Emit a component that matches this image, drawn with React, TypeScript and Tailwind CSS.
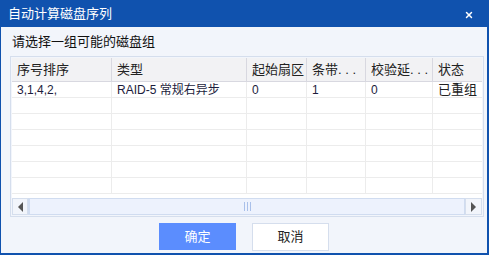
import { X } from "lucide-react";

const columns = [
  { label: "序号排序", w: "w-[100px]" },
  { label: "类型", w: "w-[135px]" },
  { label: "起始扇区", w: "w-[60px]" },
  { label: "条带. . .", w: "w-[59px]" },
  { label: "校验延. . .", w: "w-[67px]" },
  { label: "状态", w: "w-[60px]" },
];

const rows = [
  ["3,1,4,2,", "RAID-5 常规右异步", "0", "1", "0", "已重组"],
  ["", "", "", "", "", ""],
  ["", "", "", "", "", ""],
  ["", "", "", "", "", ""],
  ["", "", "", "", "", ""],
  ["", "", "", "", "", ""],
  ["", "", "", "", "", ""],
];

const App = () => {
  return (
    <div
      className="w-[489px] h-[255px] flex flex-col bg-[#1052ae] overflow-hidden"
      style={{ fontFamily: '"Liberation Sans", "Noto Sans CJK SC", sans-serif' }}
    >
      {/* title bar */}
      <div className="h-[27px] flex items-center justify-between pl-[8px] pr-[15px] pt-[2px] text-white">
        <span className="text-[13px] leading-none -mt-[2px]">自动计算磁盘序列</span>
        <X size={10} strokeWidth={3.5} />
      </div>

      <div className="flex-1 ml-px mr-[2px] mb-[2px] bg-[#f2f5fb] flex flex-col">
        <div className="h-[29px] pl-[11px] pt-[7px] text-[13px] leading-[16px] text-[#111]">请选择一组可能的磁盘组</div>

        <div className="ml-[9px] w-[474px] h-[161px] border border-[#d5deed] p-px flex flex-col">
          <div className="flex-1 bg-white overflow-hidden">
            <div className="flex bg-[#f2f2f4] h-[24px] border-b border-[#d8d8e0]">
              {columns.map((c) => (
                <div
                  key={c.label}
                  className={`${c.w} shrink-0 border-r border-[#d8d8e0] pl-[5px] flex items-center text-[13px] text-[#222]`}
                >
                  {c.label}
                </div>
              ))}
            </div>
            {rows.map((r, i) => (
              <div key={i} className="flex h-[16px] border-b border-[#ececec]">
                {r.map((cell, j) => (
                  <div
                    key={j}
                    className={`${columns[j].w} shrink-0 border-r border-[#ececec] pl-[5px] flex items-center text-[12px] leading-none text-[#1c1c3c] ${j === 5 ? "text-[13px] text-[#222]" : ""}`}
                  >
                    {cell}
                  </div>
                ))}
              </div>
            ))}
          </div>

          {/* horizontal scrollbar */}
          <div className="h-[17px] flex bg-[#edf2fd]">
            <div className="w-[16px] border border-[#d5deed] bg-[#f2f5fb] flex items-center justify-center">
              <div className="w-0 h-0 border-y-[5px] border-y-transparent border-r-[5px] border-r-[#555]" />
            </div>
            <div className="flex-1 border border-[#d0dcf0] border-l-2 border-l-[#d0dcf0] bg-[#edf2fd] flex items-center justify-center">
              <div className="flex gap-[2px]">
                <div className="w-px h-[9px] bg-[#a9c0ea]" />
                <div className="w-px h-[9px] bg-[#a9c0ea]" />
                <div className="w-px h-[9px] bg-[#a9c0ea]" />
              </div>
            </div>
            <div className="w-[17px] border border-[#d5deed] bg-[#f2f5fb] flex items-center justify-center">
              <div className="w-0 h-0 border-y-[5px] border-y-transparent border-l-[5px] border-l-[#555]" />
            </div>
          </div>
        </div>

        <div className="flex justify-center gap-[16px] mt-[6px]">
          <button className="w-[77px] h-[27px] bg-[#5b8dfe] text-white text-[13px]">确定</button>
          <button className="w-[77px] h-[28px] bg-white border border-[#d5deed] text-[#222] text-[13px]">取消</button>
        </div>
      </div>
    </div>
  );
};

export default App;
